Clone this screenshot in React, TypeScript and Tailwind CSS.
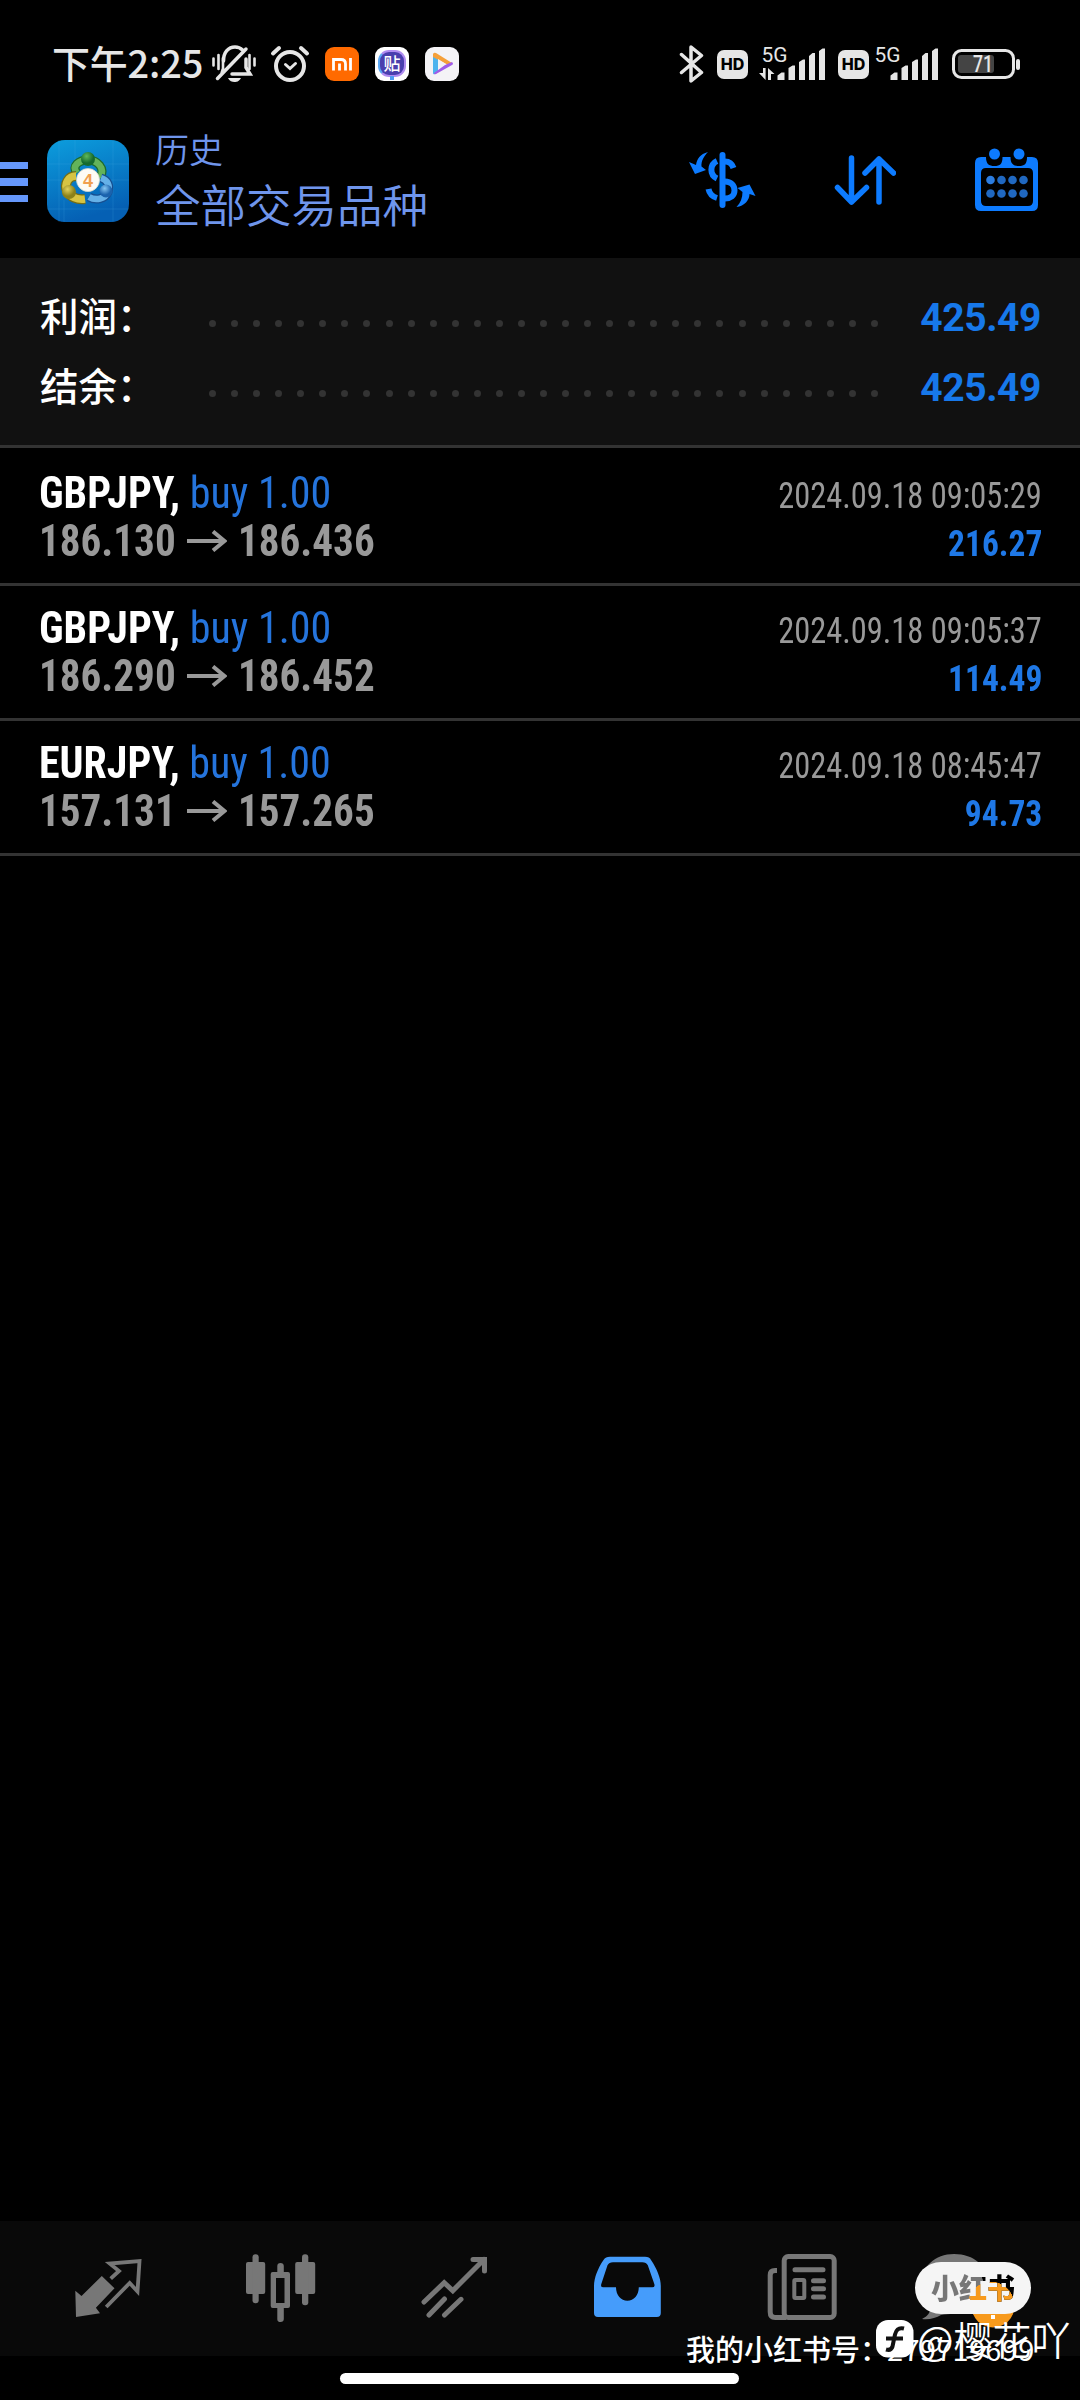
const deals = [
  { symbol: "GBPJPY", side: "buy 1.00", open: "186.130", close: "186.436", time: "2024.09.18 09:05:29", profit: "216.27" },
  { symbol: "GBPJPY", side: "buy 1.00", open: "186.290", close: "186.452", time: "2024.09.18 09:05:37", profit: "114.49" },
  { symbol: "EURJPY", side: "buy 1.00", open: "157.131", close: "157.265", time: "2024.09.18 08:45:47", profit: "94.73" },
];

const totals = [
  { label: "利润：", value: "425.49" },
  { label: "结余：", value: "425.49" },
];

const Signal = ({ className, arrows }: any) => {
  return (
    <svg width="68" height="52" viewBox="0 -8 68 52" className={className} fill="#e6e6e6">
      <text x="2.500" y="15.500" fontSize="21" fontFamily="Roboto" textLength="26" lengthAdjust="spacingAndGlyphs">
        5G
      </text>
      {arrows && <path d="M4 22h2.600v12L0 27h4zM9 34V22l6.500 6H12v6z" />}
      <path d="M18.500 34v-4.500l4-3h3V34zM29.500 34V22l4-2.500h2.500V34zM40 34V16l4-2.500h2V34zM50 34V10l3.500-3h2.500v27zM60 34V5l3.500-2.500h2.500V34z" />
    </svg>
  );
};

const Hd = ({ className }: any) => {
  return (
    <div className={`h-[29px] w-[31px] rounded-[7px] bg-[#e6e6e6] text-center font-['Inter'] text-[16px] leading-[29px] font-extrabold text-black ${className}`}>
      HD
    </div>
  );
};

const StatusBar = () => {
  return (
    <div className="flex h-[128px] items-center text-[#e6e6e6]">
      <span className="ml-[52px] w-[159px] pb-[5px] font-['Noto_Sans_CJK_SC',sans-serif] text-[38px] leading-none font-medium tracking-[-0.2px] whitespace-nowrap">
        下午2:25
      </span>
      <svg width="46" height="40" viewBox="0 0 46 40" fill="none" stroke="#e6e6e6" strokeWidth="3.500" strokeLinecap="round">
        <path d="M2.500 14.500v7M7.500 11v14M12 14v12M38.500 11v14M43.500 14.500v7" strokeWidth="2.600" />
        <path d="M12.500 17c0-9 5-14 11.500-14 3 0 5.500 1 7.500 3M35 15v8.500l4 6.500H21M12 26l-1 3M6.500 34.500L35 5" />
        <path d="M17 34h13c-2 3.500-4 4-6.500 4S18.500 37 17 34z" fill="#e6e6e6" stroke="none" />
      </svg>
      <svg width="40" height="40" viewBox="0 0 40 40" className="ml-[13px]" fill="none" stroke="#e6e6e6" strokeWidth="4" strokeLinecap="round">
        <circle cx="20" cy="22" r="14" />
        <path d="M3 9.500L9 4M37 9.500L31 4" />
        <path d="M15.500 20.500l4.500 4 5.500-5" strokeWidth="3" />
      </svg>
      <svg width="34" height="34" viewBox="0 0 34 34" className="ml-[15px]">
        <rect width="34" height="34" rx="9" fill="#ff6a00" />
        <path d="M8.500 23.500V12.500h7.500q4.500 0 4.500 4.500v6.500M14.500 16.500v7M25.500 11v12.500" fill="none" stroke="#fff" strokeWidth="2.800" />
      </svg>
      <div className="relative ml-[16px] h-[34px] w-[34px] rounded-[9px] bg-white p-[3px]">
        <div className="h-[27px] rounded-[11px] border-2 border-[#b08cf0] border-l-[#5ba8f5] bg-[#4a3fae] text-center font-['Noto_Sans_CJK_SC',sans-serif] text-[17px] leading-[22px] font-medium text-white">
          贴
        </div>
        <div className="absolute bottom-[1px] left-[15px] h-[4px] w-[4px] bg-[#4f9df2]"></div>
      </div>
      <svg width="34" height="34" viewBox="0 0 34 34" className="ml-[16px]">
        <rect width="34" height="34" rx="9" fill="#f4f3f6" />
        <path d="M8 7v19q0 2 2 1l3-2V10z" fill="#4db3ee" />
        <path d="M8 7q1-2 3-1l16 10-4 2-15-8z" fill="#f5a03a" />
        <path d="M27 15q2 2 0 3L11 27q-2 1-2-1l11-8z" fill="#a05ce8" />
        <path d="M13 12l8 5-8 5z" fill="#f4f3f6" />
      </svg>

      <svg width="25" height="38" viewBox="0 0 25 38" className="ml-[220px]" fill="none" stroke="#e6e6e6" strokeWidth="3.500" strokeLinecap="round" strokeLinejoin="round">
        <path d="M2.500 9.500l20 18L12 36V2l10.500 8.500-20 17" />
      </svg>
      <Hd className="ml-[13px]" />
      <Signal arrows className="ml-[11px]" />
      <Hd className="ml-[11px]" />
      <Signal className="ml-[3px]" />
      <svg width="72" height="32" viewBox="0 0 72 32" className="ml-[10px]">
        <rect x="3.500" y="2.500" width="60" height="27" rx="8" fill="none" stroke="#e6e6e6" strokeWidth="3" />
        <rect x="8" y="7" width="36" height="18" rx="3" fill="#444" />
        <rect x="66" y="11" width="4" height="11" rx="2" fill="#e6e6e6" />
        <text x="33" y="24" fontSize="24" fontFamily="Roboto" fontWeight="500" fill="#e6e6e6" textAnchor="middle" textLength="20" lengthAdjust="spacingAndGlyphs">
          71
        </text>
      </svg>
    </div>
  );
};

const AppLogo = () => {
  return (
    <svg width="82" height="82" viewBox="0 0 82 82" className="ml-[19px]">
      <defs>
        <linearGradient id="sky" x1="0" y1="0" x2="0.300" y2="1">
          <stop offset="0" stopColor="#0c9ddd" />
          <stop offset="1" stopColor="#0560b4" />
        </linearGradient>
        <radialGradient id="green" cx="0.400" cy="0.300">
          <stop offset="0" stopColor="#5fb85c" />
          <stop offset="1" stopColor="#156a2d" />
        </radialGradient>
        <radialGradient id="gold" cx="0.400" cy="0.300">
          <stop offset="0" stopColor="#e3d35c" />
          <stop offset="1" stopColor="#8b8119" />
        </radialGradient>
        <radialGradient id="azure" cx="0.400" cy="0.300">
          <stop offset="0" stopColor="#86c8f4" />
          <stop offset="1" stopColor="#1a62ad" />
        </radialGradient>
      </defs>
      <rect width="82" height="82" rx="18" fill="url(#sky)" />
      <path d="M12 0v82M66 0v82M0 24h82M0 40h82M17 60v22M0 69h82M28 0v20" stroke="#4fb9ef" strokeOpacity="0.180" />
      <g fill="none">
        <path d="M30 33C24 26 32 20 41 20s18 8 12 18" stroke="#1d6b2b" strokeWidth="9" />
        <path d="M30 33C24 26 32 20 41 20s18 8 12 18" stroke="#63b35a" strokeWidth="6.500" />
        <path d="M54 38c7 2 9 8 7 14-3 7-12 9-19 5" stroke="#164f91" strokeWidth="9" />
        <path d="M54 38c7 2 9 8 7 14-3 7-12 9-19 5" stroke="#65b1e8" strokeWidth="6.500" />
        <path d="M29 36c-8 0-12 8-9 15 3 6 10 9 18 8" stroke="#746d16" strokeWidth="10" />
        <path d="M29 36c-8 0-12 8-9 15 3 6 10 9 18 8" stroke="#d6c443" strokeWidth="7.500" />
      </g>
      <circle cx="41" cy="19" r="7" fill="url(#green)" />
      <circle cx="22" cy="52" r="7" fill="url(#gold)" />
      <circle cx="59" cy="51" r="6.500" fill="url(#azure)" />
      <circle cx="41" cy="40" r="11.500" fill="#fdfbf5" stroke="#d8d8c8" strokeWidth="0.800" />
      <text x="41" y="46.500" fontSize="18" fontFamily="Liberation Sans" fontWeight="700" fill="#f0a050" textAnchor="middle">
        4
      </text>
    </svg>
  );
};

const Header = () => {
  return (
    <div className="mb-[24px] flex h-[106px] items-center">
      <div className="flex w-[28px] flex-col gap-[9px] pt-[2px]">
        <div className="h-[7.500px] bg-[#6597fb]"></div>
        <div className="h-[7.500px] bg-[#6597fb]"></div>
        <div className="h-[7.500px] bg-[#6597fb]"></div>
      </div>
      <AppLogo />
      <div className="ml-[26px] w-[533px] pb-[3px] font-['Noto_Sans_CJK_SC',sans-serif] font-[350] text-[#6f95ec]">
        <div className="text-[34px] leading-[46px]">历史</div>
        <div className="text-[45.500px] leading-[62px]">全部交易品种</div>
      </div>
      <svg width="70" height="60" viewBox="0 0 70 60" fill="#0d7bff">
        <path d="M20 1C12 3 9 8 8 14L1 11l6 12 11-4-4.500-3.500C13 10 16 5 20 1zM48.500 56c8-1 13-7 13-13l6 2-6-11.500-12 3.500 5 4c0 6-2 11-6 15z" />
        <rect x="31.500" y="1" width="6" height="56" rx="3" />
        <path d="M29 10c-7.500 3.500-7.500 14 0 17.500M37 10.500c4 0 7 2 8.500 6.500M20.500 38c1 5 3.500 7.500 8.500 9M37 30.500c6 0 9.500 4 9.500 9s-4 8-9.500 8" fill="none" stroke="#0d7bff" strokeWidth="6" />
      </svg>
      <svg width="62" height="52" viewBox="0 0 62 52" className="ml-[76px]" fill="none" stroke="#0d7bff" strokeWidth="5.500" strokeLinecap="round" strokeLinejoin="round">
        <path d="M17.500 3v44M3.500 32.500L17.500 47l15-14.500M45 47V4M31 18L45 4l14.500 14" />
      </svg>
      <svg width="64" height="64" viewBox="0 0 64 64" className="mb-[2px] ml-[79px]" fill="#0d7bff">
        <path fillRule="evenodd" d="M6 9h5c0 7 3 9 8.500 9s8-2 8-9h8c0 7 3 9 8.500 9s8-2 8-9h5q6 0 6 6v42q0 6-6 6H6q-6 0-6-6V15q0-6 6-6zM11 20q-5 0-5 5v28q0 5 5 5h42q5 0 5-5V25q0-5-5-5z" />
        <circle cx="19.500" cy="6" r="5.500" />
        <circle cx="44" cy="6" r="5.500" />
        <g fill="#2068c0">
          <circle cx="15.500" cy="32" r="4.300" fill="#2c7de0" />
          <circle cx="26.500" cy="32" r="4.300" />
          <circle cx="37.500" cy="32" r="4.300" />
          <circle cx="48.500" cy="32" r="4.300" />
          <circle cx="15.500" cy="45.500" r="4.300" />
          <circle cx="26.500" cy="45.500" r="4.300" />
          <circle cx="37.500" cy="45.500" r="4.300" />
          <circle cx="48.500" cy="45.500" r="4.300" />
        </g>
      </svg>
    </div>
  );
};

const Summary = () => {
  return (
    <div className="h-[190px] border-b-3 border-[#333] bg-[#111] pt-[23px]">
      {totals.map((t) => (
        <div key={t.label} className="flex h-[70px] items-center pr-[39px] pl-[40px]">
          <span className="w-[169px] pb-[4px] font-['Noto_Sans_CJK_SC',sans-serif] text-[38.500px] leading-none font-medium text-white">{t.label}</span>
          <div className="flex w-[669px] justify-between pt-[15px]">
            {Array.from({ length: 31 }).map((_, i) => (
              <div key={i} className="h-[7px] w-[7px] rounded-full bg-[#333]"></div>
            ))}
          </div>
          <span className="ml-auto pt-[4px] font-['Roboto'] text-[39px] leading-none font-bold tracking-[-0.4px] text-[#1778ea]">{t.value}</span>
        </div>
      ))}
    </div>
  );
};

const Deal = ({ deal }: any) => {
  return (
    <div className="h-[135px] border-b-3 border-[#333] pt-[18px] pr-[38px] pl-[39px] font-['Roboto'] [font-stretch:75%] first:h-[138px] first:pt-[21px]">
      <div className="flex h-[48px] items-baseline justify-between leading-[48px]">
        <div className="origin-left scale-x-[0.955] text-[44px]">
          <span className="font-bold text-white">{deal.symbol},</span> <span className="text-[#2574dc]">{deal.side}</span>
        </div>
        <span className="origin-right scale-x-[0.9] text-[36px] text-[#999]">{deal.time}</span>
      </div>
      <div className="flex h-[48px] items-baseline justify-between leading-[48px]">
        <div className="flex items-baseline text-[44px] font-bold text-[#999]">
          <span className="w-[148px] origin-left scale-x-[0.935]">{deal.open}</span>
          <svg width="40" height="22" viewBox="0 0 40 22" className="mr-[11px] self-center" fill="none" stroke="#999" strokeWidth="4">
            <path d="M0 11h37M26 1.500L37.500 11 26 20.500" />
          </svg>
          <span className="origin-left scale-x-[0.935]">{deal.close}</span>
        </div>
        <span className="origin-right scale-x-[0.93] text-[36px] font-bold text-[#1f78e6]">{deal.profit}</span>
      </div>
    </div>
  );
};

const NavBar = () => {
  return (
    <div className="grid h-[135px] grid-cols-6 items-center justify-items-center bg-[#090909] pr-[18px] pb-[2px] pl-[21px]">
      <svg width="80" height="80" viewBox="0 0 80 80" fill="#777">
        <path d="M7.300 42.700l6.200 5.300 20.300-20 12.700 12.300-18.600 19.400 4.100 5.600L8 69z" />
        <path d="M42.700 30.700L51 23l-9.300-7.500L71.500 13 69.500 43.500 61.700 35 38.200 59" fill="none" stroke="#777" strokeWidth="3.800" />
      </svg>
      <svg width="80" height="80" viewBox="0 0 80 80" fill="#777">
        <rect x="5" y="14" width="19.200" height="32" rx="2" />
        <rect x="11.500" y="6.300" width="6.200" height="49" rx="3" />
        <path fillRule="evenodd" d="M36.300 24v-6q0-3 3.200-3t3.300 3v6H47q2 0 2 2v32q0 2-2 2h-4.200v11q0 3-3.300 3t-3.200-3V60h-4.600q-2 0-2-2V26q0-2 2-2zM35 30v25h8.500V30z" />
        <rect x="54.200" y="14" width="20" height="32" rx="2" />
        <rect x="61" y="6.300" width="6.300" height="51" rx="3" />
      </svg>
      <svg width="80" height="80" viewBox="0 0 80 80" fill="none" stroke="#777" strokeWidth="5" strokeLinecap="round">
        <path d="M9 54l20.200-19.300 8.600 8L69 11.500M58 11.500h11.500V23M29.500 51L14 67M46 51.300L29.500 67" />
      </svg>
      <svg width="80" height="80" viewBox="0 0 80 80" fill="#459cfb">
        <path fillRule="evenodd" d="M22 8.700h35q4.500 0 6 3.300c6 9 9.800 18 9.800 26v27q0 4-4 4H10q-4 0-4-4V38c0-8 4-18 9.500-26q2-3.300 6.500-3.300zM25 14.300q-4 0-5.500 3L13.300 36q-1 3.300 2 3.300H28c0 8 5 13.400 11.400 13.400s11.400-5.400 11.400-13.400h13.500q3 0 2-3.300l-6.500-18.700q-1.500-3-5.500-3z" />
      </svg>
      <svg width="80" height="80" viewBox="0 0 80 80" fill="none" stroke="#777" strokeWidth="5">
        <rect x="22.200" y="8.500" width="50" height="61" rx="4" />
        <path d="M15 22.500h-2q-4.800 0-4.800 4.500v37q0 5.500 5 5.500h11" />
        <path d="M33 21.700h28M51.500 32.700h10M51.500 40.700h10M51.500 49h10" strokeLinecap="round" />
        <rect x="32.300" y="32" width="10" height="18" rx="1" strokeWidth="4" />
      </svg>
      <svg width="80" height="80" viewBox="0 0 80 80" className="overflow-visible">
        <path d="M19 6c20 0 34 12 34 30S39 66 19 66c-5 0-9 0-13 1-5 3-12 5-19 4 6-3 8-6 8-11-6-6-9-13-9-21C-14 18 0 6 19 6z" fill="#777" />
        <circle cx="58" cy="58" r="21.500" fill="#f79a1d" />
        <path d="M58 44v20M58 67v4" stroke="#fff" strokeWidth="4" />
      </svg>
    </div>
  );
};

const Watermark = () => {
  return (
    <>
      <div className="absolute top-[2262px] left-[915px] h-[52px] w-[116px] rounded-full bg-[#f5f5f5] text-center">
        <span className="inline-block bg-[radial-gradient(circle_at_60px_43px,#f79a1d_23px,transparent_23.5px),radial-gradient(circle_at_20px_24px,#777_32px,#000_32.5px)] bg-clip-text font-['Noto_Sans_CJK_SC',sans-serif] text-[28px] leading-[50px] font-black text-transparent">
          小红书
        </span>
      </div>
      <div className="absolute top-[2327px] left-[686px] font-['Noto_Sans_CJK_SC',sans-serif] text-[29px] leading-[42px] font-medium whitespace-nowrap text-white">
        我的小红书号：
      </div>
      <div className="absolute top-[2327px] left-[887px] font-['Noto_Sans_CJK_SC',sans-serif] text-[29px] leading-[42px] tracking-[0.3px] whitespace-nowrap text-white">
        279719699
      </div>
      <div className="absolute top-[2316px] left-[876px] flex items-center">
        <svg width="38" height="38" viewBox="0 0 38 38" className="mb-[4px]">
          <rect width="37.500" height="37.500" rx="12" fill="#fff" />
          <path d="M28 8.500c-6-1.500-8 2-9 6l-2.500 12c-1 3-3 4-6.500 3M10 18.500h17" fill="none" stroke="#111" strokeWidth="4" />
        </svg>
        <span className="ml-[3px] pb-[6px] font-['Noto_Sans_CJK_SC',sans-serif] text-[39px] leading-[44px] font-[350] whitespace-nowrap text-white">@樱花吖</span>
      </div>
      <div className="absolute top-[2373px] left-[340px] h-[11px] w-[399px] rounded-full bg-white"></div>
    </>
  );
};

const App = () => {
  return (
    <div className="relative flex h-[2400px] w-[1080px] flex-col overflow-hidden bg-black">
      <StatusBar />
      <Header />
      <Summary />
      <div className="flex-1">
        {deals.map((deal) => (
          <Deal key={deal.time} deal={deal} />
        ))}
      </div>
      <NavBar />
      <div className="h-[44px]"></div>
      <Watermark />
    </div>
  );
};

export default App;
